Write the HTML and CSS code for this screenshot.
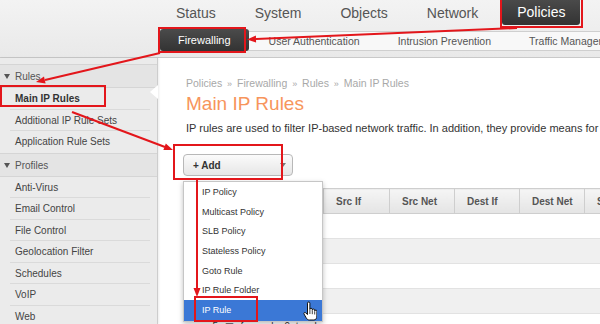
FILE: index.html
```html
<!DOCTYPE html>
<html>
  <head>
    <title>Main IP Rules</title>
    <link rel="stylesheet" href="styles.css">
  </head>
  <body>
    <div class="page">
      <div class="topbar">
        <ul class="mainnav">
          <li>Status</li>
          <li>System</li>
          <li>Objects</li>
          <li>Network</li>
          <li class="active">Policies</li>
        </ul>
        <ul class="subnav">
          <li class="active">Firewalling</li>
          <li>User Authentication</li>
          <li>Intrusion Prevention</li>
          <li>Traffic Management</li>
        </ul>
      </div>

      <div class="layout">
        <div class="sidebar">
          <div class="group-title">Rules</div>
          <div class="side-item selected">Main IP Rules</div>
          <div class="side-item">Additional IP Rule Sets</div>
          <div class="side-item last">Application Rule Sets</div>
          <div class="group-title">Profiles</div>
          <div class="side-item">Anti-Virus</div>
          <div class="side-item">Email Control</div>
          <div class="side-item">File Control</div>
          <div class="side-item">Geolocation Filter</div>
          <div class="side-item">Schedules</div>
          <div class="side-item">VoIP</div>
          <div class="side-item">Web</div>
        </div>

        <div class="content">
          <div class="crumbs">Policies <span>&raquo;</span> Firewalling <span>&raquo;</span> Rules <span>&raquo;</span> Main IP Rules</div>
          <h1>Main IP Rules</h1>
          <p class="intro">IP rules are used to filter IP-based network traffic. In addition, they provide means for address translation and server load balancing.</p>

          <div class="toolbar">
            <div class="add-wrap">
              <button type="button" class="add-btn"><span>+ Add</span><span class="caret"></span></button>
              <ul class="dropdown">
                <li>IP Policy</li>
                <li>Multicast Policy</li>
                <li>SLB Policy</li>
                <li>Stateless Policy</li>
                <li>Goto Rule</li>
                <li>IP Rule Folder</li>
                <li class="active">IP Rule
                  <svg class="cursor" width="14" height="20" viewBox="0 0 14 20">
                    <path d="M4.5 2.2a1.2 1.2 0 0 1 2.4 0V8.5a1.2 1.2 0 0 1 2.4 0v0.8a1.2 1.2 0 0 1 2.4 0v0.9a1.1 1.1 0 0 1 2.2 0V15c0 2-1 4-3 4H6.3c-1.4 0-2.4-0.9-3.1-2.1L1 13c-0.6-1 0.6-2 1.5-1.3L4.5 13.5Z" fill="#fff" stroke="#111" stroke-width="1" stroke-linejoin="round"/>
                    <path d="M6.9 9v4M9.3 9.6v3.6M11.7 10.5v3" stroke="#111" stroke-width="0.8"/>
                  </svg>
                </li>
              </ul>
            </div>
          </div>

          <table class="rules">
            <colgroup>
              <col style="width: 140px">
              <col style="width: 66px">
              <col style="width: 65px">
              <col style="width: 65px">
              <col style="width: 65px">
              <col style="width: 79px">
            </colgroup>
            <thead>
              <tr>
                <th>Name</th>
                <th>Src If</th>
                <th>Src Net</th>
                <th>Dest If</th>
                <th>Dest Net</th>
                <th>Service</th>
              </tr>
            </thead>
            <tbody>
              <tr><td></td><td></td><td></td><td></td><td></td><td></td></tr>
              <tr><td></td><td></td><td></td><td></td><td></td><td></td></tr>
              <tr><td></td><td></td><td></td><td></td><td></td><td></td></tr>
              <tr><td></td><td></td><td></td><td></td><td></td><td></td></tr>
              <tr><td class="name-cell">5 <span class="folder">&#9776;</span> from_vlan9_to_vlan10</td><td></td><td></td><td></td><td></td><td></td></tr>
            </tbody>
          </table>
        </div>
      </div>

      <svg class="marks" width="600" height="324" viewBox="0 0 600 324">
        <g fill="none" stroke="#e3161b" stroke-width="2">
          <rect x="501" y="-1" width="81" height="28"/>
          <rect x="159" y="28" width="86" height="24"/>
          <rect x="1" y="86" width="104" height="20"/>
          <rect x="174" y="145" width="108" height="34"/>
          <rect x="195" y="297" width="62" height="24"/>
          <line x1="517" y1="28" x2="256" y2="39"/>
          <line x1="160" y1="53" x2="45" y2="80"/>
          <line x1="72" y1="112" x2="165" y2="147"/>
          <line x1="197" y1="180" x2="197" y2="288"/>
        </g>
        <g fill="#e3161b">
          <polygon points="247,39.5 255.9,35.6 256.1,42.6"/>
          <polygon points="36,82 44,76.6 45.6,83.4"/>
          <polygon points="173,150 163.4,150.1 165.8,143.5"/>
          <polygon points="197,297 193.5,288 200.5,288"/>
        </g>
      </svg>
    </div>
  </body>
</html>
```

FILE: styles.css
```css
* {
  box-sizing: border-box;
}

body {
  margin: 0;
  font-family: "Liberation Sans", Arial, sans-serif;
  background-color: #fff;
  color: #333;
}

.page {
  position: relative;
  width: 600px;
  height: 324px;
  overflow: hidden;
}

/* top navigation */

.topbar {
  height: 58px;
  background: linear-gradient(#f3f3f3, #e9e9e9);
  border-bottom: 1px solid #c9c9c9;
}

.mainnav {
  display: flex;
  gap: 9px;
  height: 27px;
  margin: 0 0 0 161px;
  padding: 0;
  list-style: none;
}

.mainnav li {
  padding: 0 15px;
  line-height: 27px;
  font-size: 14px;
  color: #555;
}

.mainnav li.active {
  height: 25px;
  line-height: 25px;
  background: linear-gradient(#4a4a4a, #333);
  color: #fff;
  border-radius: 0 0 3px 3px;
}

.subnav {
  display: flex;
  gap: 2px;
  height: 20px;
  margin: 4px 0 0 160px;
  padding: 0;
  list-style: none;
  background-color: #f8f8f8;
  border: 1px solid #cfcfcf;
  border-right: none;
}

.subnav li {
  padding: 0 18px;
  line-height: 18px;
  font-size: 10.5px;
  color: #555;
  white-space: nowrap;
}

.subnav li.active {
  margin: -3px 0 -1px -1px;
  line-height: 22px;
  font-size: 11px;
  background: linear-gradient(#4b4b4b, #333);
  color: #fff;
  border-radius: 3px;
}

/* layout */

.layout {
  display: flex;
  height: 266px;
}

.sidebar {
  position: relative;
  z-index: 1;
  width: 158px;
  flex-shrink: 0;
  padding-top: 6px;
  font-size: 10px;
  background-color: #ebebeb;
  border-right: 1px solid #cdcdcd;
  box-shadow: 1px 0 2px rgba(0, 0, 0, 0.08);
}

.group-title {
  height: 24px;
  padding: 1px 0 0 4px;
  line-height: 22px;
  color: #555;
  background-color: #e4e4e4;
  border-top: 1px solid #d5d5d5;
  border-bottom: 1px solid #d5d5d5;
}

.group-title::before {
  content: "";
  display: inline-block;
  margin: 0 5px 1px 0;
  border-left: 3px solid transparent;
  border-right: 3px solid transparent;
  border-top: 5px solid #555;
}

.side-item {
  position: relative;
  height: 21.5px;
  margin: 0 7px 0 10px;
  padding-left: 5px;
  line-height: 21px;
  color: #444;
  border-bottom: 1px solid #dadada;
}

.side-item.last {
  border-bottom: none;
}

.side-item.selected {
  font-weight: bold;
  color: #333;
}

.side-item.selected::after {
  content: "";
  position: absolute;
  top: -3px;
  right: -8px;
  border-top: 7px solid transparent;
  border-bottom: 7px solid transparent;
  border-right: 8px solid #fff;
}

/* content */

.content {
  flex: 1;
  min-width: 0;
  padding: 19px 0 0 25px;
}

.crumbs {
  margin-left: 3px;
  font-size: 10.5px;
  line-height: 13px;
  color: #a8a8a8;
}

.crumbs span {
  margin: 0 2px;
  font-size: 9px;
}

h1 {
  margin: 2px 0 0 3px;
  font-size: 19px;
  line-height: 22px;
  font-weight: normal;
  color: #f7955c;
}

.intro {
  margin: 6px 0 0 3px;
  font-size: 11px;
  line-height: 14px;
  color: #333;
  white-space: nowrap;
}

.toolbar {
  margin-top: 19px;
}

.add-wrap {
  position: relative;
  width: 110px;
}

.add-btn {
  display: flex;
  align-items: center;
  justify-content: space-between;
  width: 110px;
  height: 22px;
  padding: 0 6px 0 9px;
  font-family: inherit;
  font-size: 10px;
  font-weight: bold;
  color: #333;
  background: linear-gradient(#fbfbfb, #e6e6e6);
  border: 1px solid #b8b8b8;
  border-radius: 4px;
}

.caret {
  border-left: 3.5px solid transparent;
  border-right: 3.5px solid transparent;
  border-top: 4px solid #777;
}

.dropdown {
  position: absolute;
  top: 27px;
  left: 0;
  z-index: 5;
  width: 140px;
  margin: 0;
  padding: 0;
  list-style: none;
  background-color: #fff;
  border: 1px solid #c6c6c6;
  box-shadow: 0 2px 5px rgba(0, 0, 0, 0.25);
}

.dropdown li {
  position: relative;
  height: 19.7px;
  padding-left: 18px;
  line-height: 20px;
  font-size: 9px;
  color: #333;
}

.dropdown li.active {
  height: 21px;
  line-height: 21px;
  background-color: #3b78d6;
  color: #fff;
}

.cursor {
  position: absolute;
  left: 119px;
  top: 1px;
}

/* table */

.rules {
  width: 480px;
  margin-top: 12px;
  border-collapse: collapse;
  table-layout: fixed;
  font-size: 10px;
}

.rules th {
  height: 25px;
  padding: 0 0 0 12px;
  text-align: left;
  font-weight: bold;
  color: #555;
  white-space: nowrap;
  overflow: hidden;
  background: linear-gradient(#f5f5f5, #e4e4e4);
  border: 1px solid #cecece;
}

.rules td {
  height: 25px;
  padding: 0;
  border-bottom: 1px solid #e2e2e2;
}

.rules tbody tr:nth-child(even) td {
  background-color: #f0f0f0;
}

.name-cell {
  padding-left: 29px !important;
  padding-top: 1px !important;
  color: #333;
  white-space: nowrap;
  overflow: hidden;
}

.folder {
  margin: 0 4px;
  color: #777;
}

.marks {
  position: absolute;
  top: 0;
  left: 0;
  z-index: 10;
  pointer-events: none;
}
```
